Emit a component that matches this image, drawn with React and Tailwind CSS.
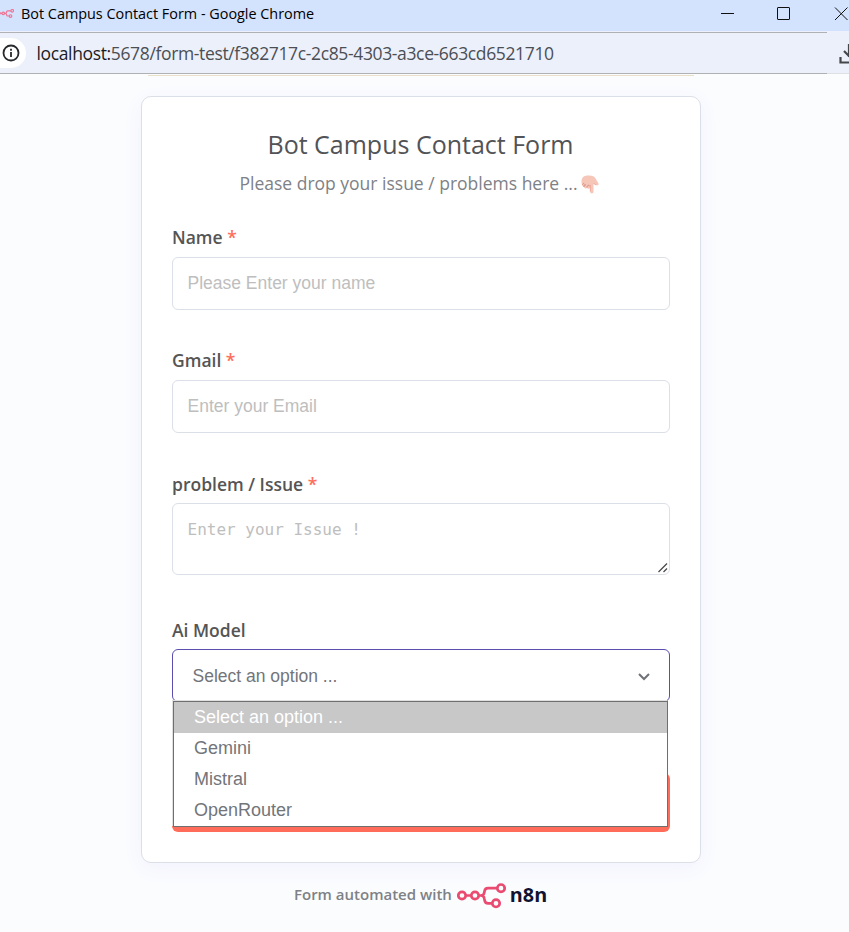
import React from "react";

function NodesMark({ className, color = "#ea4b71", stroke = 2.7 }) {
  return (
    <svg className={className} viewBox="0 0 49 26" fill="none" stroke={color} strokeWidth={stroke}>
      <circle cx="5" cy="12.5" r="3.7" />
      <circle cx="18" cy="12.5" r="3.7" />
      <circle cx="44" cy="5.2" r="3.7" />
      <circle cx="39" cy="20.3" r="3.7" />
      <path d="M8.700 12.500h5.600M21.700 12.500h2.200c2.200 0 3.100-1 3.400-3l.2-1.200c.3-2 1.500-3.100 3.500-3.100h9.300M23.900 12.500c2.200 0 3.100 1 3.400 3l.3 1.700c.3 2 1.500 3.100 3.500 3.100h4.200" />
    </svg>
  );
}

function TitleBar() {
  return (
    <div className="flex h-[31px] items-start bg-[#d3e2fd] font-['Open_Sans',sans-serif] text-black">
      <NodesMark className="-ml-[3px] mt-[9px] h-[9px] w-[17px] shrink-0" color="#ef7595" stroke={3.4} />
      <span className="ml-[7px] text-[14.4px] leading-7 whitespace-nowrap">Bot Campus Contact Form - Google Chrome</span>
      <svg className="ml-auto h-7 w-[130px] shrink-0" viewBox="0 0 130 28" fill="none" stroke="#111" strokeWidth="1">
        <path d="M2 13.500h13" />
        <rect x="58.500" y="7.500" width="12" height="12" rx="0.500" />
        <path d="M116 7.500l12.500 12.500M128.500 7.500L116 20" />
      </svg>
    </div>
  );
}

function AddressBar() {
  return (
    <div className="flex h-[43px] bg-[#ecf0fa]">
      <div className="mt-px flex w-[827px] items-center border-y border-[#b0b1b5]">
        <span className="flex h-[30px] w-[26px] items-center justify-start rounded-r-full bg-white">
          <svg className="h-[22px] w-[22px]" viewBox="0 0 22 22" fill="none" stroke="#27292d" strokeWidth="1.800">
            <circle cx="11" cy="11" r="7.500" />
            <path d="M11 10v5M11 6.800v1.900" />
          </svg>
        </span>
        <span className="ml-[10.5px] font-['Open_Sans',sans-serif] text-[17.5px] tracking-[-0.36px] whitespace-nowrap text-[#4b4e54]">
          <span className="text-[#1b1c1f]">localhost:</span>5678/form-test/f382717c-2c85-4303-a3ce-663cd6521710
        </span>
      </div>
      <svg className="h-[43px] w-[22px]" viewBox="0 0 22 43" fill="none" stroke="#45474b" strokeWidth="2.2">
        <path d="M0 42.500h22" stroke="#dfe0e2" strokeWidth="1" />
        <path d="M22 13v13M17 20l5.500 5.500M13.500 26v5.500h9" />
      </svg>
    </div>
  );
}

function Label({ children, required }) {
  return (
    <div className="h-6 text-[17.5px] leading-6 font-semibold text-[#555]">
      {children}
      {required && <span className="text-[#ff6d5a]"> *</span>}
    </div>
  );
}

function TextField({ label, placeholder }) {
  return (
    <div className="mb-[38px]">
      <Label required>{label}</Label>
      <div className="mt-2 h-[53px] rounded-md border border-[#dbdfe7] px-[14.5px] font-['Liberation_Sans',Arial,sans-serif] text-[17.5px] leading-[51px] text-[#bebebe]">
        {placeholder}
      </div>
    </div>
  );
}

function PointingHand() {
  return (
    <svg className="ml-[3px] h-[19px] w-[18px] translate-y-px" viewBox="0 0 18 19">
      <path
        d="M.5 6.500C.5 2.500 3 .500 7 .500c4.500 0 6 .700 7.500 3l3 5c.5 1.500-1 2.300-2.200 1.500L12.500 8.500v8.200c0 2.300-3.300 2.300-3.300 0V13c-1 1-2.600.9-3.200 0-1 .8-2.700.300-3-1C1.500 11.500.500 10 .5 6.500z"
        fill="#f6c6b8"
      />
      <path d="M3 12c-.3-1.800.8-2.600 2-2M6 12.500c0-1.800 1.200-2.600 2.400-2M1.500 9.500c.5-1 1.200-1 1.800-.500" fill="none" stroke="#cf8579" strokeWidth="0.900" />
      <path d="M9.300 10v6.500M12.500 8.500l2.800 1.500" fill="none" stroke="#eaa092" strokeWidth="0.800" />
    </svg>
  );
}

const options = ["Select an option ...", "Gemini", "Mistral", "OpenRouter"];

export default function App() {
  return (
    <div className="h-[932px] w-[849px] overflow-hidden bg-[#fbfcfe] font-['Open_Sans',sans-serif]">
      <TitleBar />
      <AddressBar />
      <div className="mt-px ml-[148px] h-px w-[546px] bg-[#eadfc9]" />
      <div className="ml-[141px] mt-5 h-[767px] w-[560px] rounded-[10px] border border-[#dbdfe7] bg-white px-[30px] shadow-[0_5px_20px_rgba(99,77,255,0.06)]">
        <h1 className="mt-[29px] pr-px text-center text-[25px] leading-9 text-[#525356]">Bot Campus Contact Form</h1>
        <p className="mt-[7px] mb-[28px] flex h-7 items-center justify-center pr-[4px] text-[17.5px] text-[#7e8186]">
          Please drop your issue / problems here ...
          <PointingHand />
        </p>
        <TextField label="Name" placeholder="Please Enter your name" />
        <TextField label="Gmail" placeholder="Enter your Email" />
        <div className="pt-px"><Label required>problem / Issue</Label></div>
        <div className="mt-[7px] flex h-[72px] items-start justify-between rounded-md border border-[#dbdfe7] pl-[14.5px] font-['DejaVu_Sans_Mono',monospace] text-[16px] leading-[52px] text-[#bebebe]">
          <span>Enter your Issue !</span>
          <svg className="mr-px mb-px h-[10px] w-[10px] self-end" viewBox="0 0 10 10" stroke="#4b4b4b" strokeWidth="1.300">
            <path d="M0.500 9L9 0.500M5.500 9L9 5.500" />
          </svg>
        </div>
        <div className="mt-[43px]"><Label>Ai Model</Label></div>
        <div className="relative mt-[7px] h-[53px] rounded-md border border-[#5a4fae] font-['Liberation_Sans',Arial,sans-serif] text-[17.5px] text-[#72757a]">
          <div className="flex h-[53px] items-center justify-between pr-[19px] pl-[19.5px]">
            <span>{options[0]}</span>
            <svg className="h-[12px] w-[12px]" viewBox="0 0 12 12" fill="none" stroke="#6f7278" strokeWidth="2">
              <path d="M1 3l5 5 5-5" />
            </svg>
          </div>
          <ul className="absolute top-[51px] left-0 z-10 h-[126px] w-[495px] border border-[#6f6f6f] bg-white text-[18px] leading-[31px] shadow-[-1px_-1px_0_0_#e0e0e0]">
            {options.map((o, i) => (
              <li key={o} className={i === 0 ? "bg-[#c8c8c8] pl-5 text-white" : "pl-5"}>{o}</li>
            ))}
          </ul>
        </div>
        <div className="mt-[71px] h-[59px] rounded-md bg-[#ff6d5a]" />
      </div>
      <div className="ml-[294px] mt-[19px] flex h-[26px] items-center text-[15px] font-semibold text-[#7e8186]">
        <span className="-mt-0.5 whitespace-nowrap">Form automated with</span>
        <NodesMark className="ml-[5px] h-[26px] w-[49px] translate-y-px" />
        <span className="ml-[4px] text-[19.8px] font-bold text-[#101330]">n8n</span>
      </div>
    </div>
  );
}
